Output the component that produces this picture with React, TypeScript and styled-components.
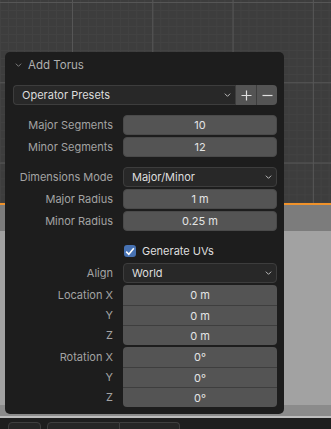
import React from "react";
import styled, { createGlobalStyle } from "styled-components";

const GlobalStyle = createGlobalStyle`
  html, body {
    margin: 0;
    padding: 0;
    background: #1d1d1d;
  }
  body {
    font-family: "Inter", "DejaVu Sans", sans-serif;
    font-size: 11px;
  }
`;

interface Field {
  label: string;
  value: string;
}

const location: Field[] = [
  { label: "Location X", value: "0 m" },
  { label: "Y", value: "0 m" },
  { label: "Z", value: "0 m" },
];

const rotation: Field[] = [
  { label: "Rotation X", value: "0°" },
  { label: "Y", value: "0°" },
  { label: "Z", value: "0°" },
];

function Chevron({ size = 7, color = "#cfcfcf" }: { size?: number; color?: string }) {
  return (
    <svg width={size} height={Math.round(size * 0.6)} viewBox="0 0 10 6">
      <path d="M1 1 L5 5 L9 1" fill="none" stroke={color} strokeWidth="1.3" />
    </svg>
  );
}

export default function App() {
  return (
    <>
      <GlobalStyle />
      <Screen>
        <Viewport />
        <ActiveLine />
        <EditorHeader />
        <EditorBody />
        <EditorFooter />
        <Divider />
        <StatusBar>
          <BarButton $w={31} />
          <BarJoin>
            <BarButton $w={71} $joined="left" />
            <BarButton $w={59} $joined="right" />
          </BarJoin>
        </StatusBar>

        <RedoPanel>
          <PanelHeader>
            <Chevron size={7} color="#8c8c8c" />
            <span>Add Torus</span>
          </PanelHeader>

          <PresetRow>
            <PresetMenu>
              <span>Operator Presets</span>
              <Chevron size={7} />
            </PresetMenu>
            <IconButton>
              <svg width="11" height="11" viewBox="0 0 11 11">
                <path d="M5.5 0.5 V10.5 M0.5 5.5 H10.5" stroke="#e0e0e0" strokeWidth="1.2" />
              </svg>
            </IconButton>
            <IconButton $last>
              <svg width="11" height="11" viewBox="0 0 11 11">
                <path d="M0.5 5.5 H10.5" stroke="#e0e0e0" strokeWidth="1.2" />
              </svg>
            </IconButton>
          </PresetRow>

          <Block>
            <Row>
              <Label>Major Segments</Label>
              <NumField>10</NumField>
            </Row>
            <Row>
              <Label>Minor Segments</Label>
              <NumField>12</NumField>
            </Row>
          </Block>

          <Block>
            <Row>
              <Label>Dimensions Mode</Label>
              <MenuField>
                <span>Major/Minor</span>
                <Chevron size={7} />
              </MenuField>
            </Row>
            <Row>
              <Label>Major Radius</Label>
              <NumField>1 m</NumField>
            </Row>
            <Row>
              <Label>Minor Radius</Label>
              <NumField>0.25 m</NumField>
            </Row>
          </Block>

          <Block>
            <Row>
              <span />
              <CheckLine>
                <CheckBox>
                  <svg width="10" height="9" viewBox="0 0 10 9">
                    <path d="M1.2 4.6 L3.8 7.2 L8.8 1.2" fill="none" stroke="#ffffff" strokeWidth="1.6" />
                  </svg>
                </CheckBox>
                <span>Generate UVs</span>
              </CheckLine>
            </Row>
            <Row>
              <Label>Align</Label>
              <MenuField>
                <span>World</span>
                <Chevron size={7} />
              </MenuField>
            </Row>
            <Group>
              {location.map((f) => (
                <GroupRow key={f.label}>
                  <Label>{f.label}</Label>
                  <GroupField>{f.value}</GroupField>
                </GroupRow>
              ))}
            </Group>
            <Group>
              {rotation.map((f) => (
                <GroupRow key={f.label}>
                  <Label>{f.label}</Label>
                  <GroupField>{f.value}</GroupField>
                </GroupRow>
              ))}
            </Group>
          </Block>
        </RedoPanel>
      </Screen>
    </>
  );
}

const Screen = styled.div`
  position: relative;
  width: 331px;
  height: 429px;
  overflow: hidden;
  display: flex;
  flex-direction: column;
`;

const Viewport = styled.div`
  height: 203px;
  background-color: #3d3d3d;
  background-image:
    linear-gradient(to right, #565656 1px, transparent 1px),
    linear-gradient(to bottom, #565656 1px, transparent 1px),
    linear-gradient(to right, #424242 1px, transparent 1px),
    linear-gradient(to bottom, #424242 1px, transparent 1px);
  background-size: 80.3px 80.3px, 80.3px 80.3px, 8.03px 8.03px, 8.03px 8.03px;
  background-position: 72px 2px, 72px 2px, 0 2px, 0 2px;
`;

const ActiveLine = styled.div`
  height: 2px;
  background: #f0922a;
`;

const EditorHeader = styled.div`
  height: 26px;
  background: #7c7c7c;
`;

const EditorBody = styled.div`
  flex: 1;
  background: #a2a2a2;
`;

const EditorFooter = styled.div`
  height: 11px;
  background: #8b8b8b;
`;

const Divider = styled.div`
  height: 2px;
  background: #bdbdbd;
`;

const StatusBar = styled.div`
  height: 11px;
  background: #1e1e1e;
  display: flex;
  gap: 6px;
  padding: 4px 0 0 8px;
  box-sizing: border-box;
`;

const BarJoin = styled.div`
  display: flex;
`;

const BarButton = styled.div<{ $w: number; $joined?: "left" | "right" }>`
  width: ${(p) => p.$w}px;
  height: 16px;
  border: 1px solid #3f3f3f;
  border-left-width: ${(p) => (p.$joined === "right" ? "0" : "1px")};
  border-radius: ${(p) =>
    p.$joined === "left" ? "4px 0 0 4px" : p.$joined === "right" ? "0 4px 4px 0" : "4px"};
  background: #262626;
`;

const RedoPanel = styled.div`
  position: absolute;
  left: 5px;
  top: 52px;
  width: 279px;
  height: 362px;
  box-sizing: border-box;
  padding: 0 7px 7px 8px;
  background: #1d1d1d;
  border-radius: 5px;
  display: flex;
  flex-direction: column;
  gap: 10px;
`;

const PanelHeader = styled.div`
  height: 26px;
  margin-bottom: -3px;
  display: flex;
  align-items: center;
  gap: 6px;
  padding-left: 2px;
  color: #b0b0b0;
  font-size: 11.5px;
`;

const PresetRow = styled.div`
  display: flex;
  height: 20px;
`;

const PresetMenu = styled.div`
  flex: 1;
  display: flex;
  align-items: center;
  justify-content: space-between;
  padding: 0 4px 0 8px;
  background: #282828;
  border: 1px solid #3d3d3d;
  border-right: none;
  border-radius: 4px 0 0 4px;
  color: #dcdcdc;
`;

const IconButton = styled.div<{ $last?: boolean }>`
  width: 20px;
  display: flex;
  align-items: center;
  justify-content: center;
  background: #545454;
  border-left: 1px solid #3d3d3d;
  border-radius: ${(p) => (p.$last ? "0 4px 4px 0" : "0")};
`;

const Block = styled.div`
  display: flex;
  flex-direction: column;
  gap: 2px;
`;

const Row = styled.div`
  display: grid;
  grid-template-columns: 100px 154px;
  column-gap: 10px;
  height: 20px;
  align-items: center;
`;

const Label = styled.span`
  text-align: right;
  color: #a3a3a3;
  white-space: nowrap;
`;

const NumField = styled.div`
  height: 20px;
  box-sizing: border-box;
  display: flex;
  align-items: center;
  justify-content: center;
  background: #545454;
  border: 1px solid #4a4a4a;
  border-radius: 4px;
  color: #e4e4e4;
`;

const MenuField = styled.div`
  height: 20px;
  box-sizing: border-box;
  display: flex;
  align-items: center;
  justify-content: space-between;
  padding: 0 4px 0 8px;
  background: #282828;
  border: 1px solid #3d3d3d;
  border-radius: 4px;
  color: #dedede;
`;

const CheckLine = styled.div`
  display: flex;
  align-items: center;
  gap: 6px;
  padding-left: 1px;
  color: #dedede;
`;

const CheckBox = styled.div`
  width: 12px;
  height: 12px;
  border-radius: 3px;
  background: #4772b3;
  display: flex;
  align-items: center;
  justify-content: center;
`;

const Group = styled.div`
  display: grid;
  grid-template-columns: 100px 154px;
  column-gap: 10px;
`;

const GroupRow = styled.div`
  display: contents;

  & > span {
    height: 20px;
    line-height: 20px;
  }

  &:not(:first-child) > div {
    border-top: 1px solid #3e3e3e;
  }

  &:first-child > div {
    border-radius: 4px 4px 0 0;
  }

  &:last-child > div {
    border-radius: 0 0 4px 4px;
  }
`;

const GroupField = styled.div`
  height: 20px;
  box-sizing: border-box;
  display: flex;
  align-items: center;
  justify-content: center;
  background: #545454;
  color: #e4e4e4;
`;
